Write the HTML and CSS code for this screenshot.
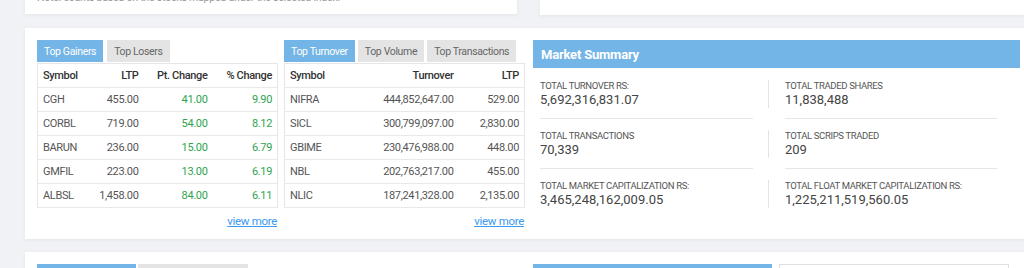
FILE: index.html
```html
<!DOCTYPE html>
<html lang="en">
<head>
    <meta charset="UTF-8">
    <meta name="viewport" content="width=device-width, initial-scale=1.0">
    <title>Market Overview</title>
    <link rel="stylesheet" href="styles.css">
</head>
<body>
    <div class="top-row">
        <div class="card note-card">
            <p class="note">Note: counts based on the stocks mapped under the selected index.</p>
        </div>
        <div class="card side-card"></div>
    </div>

    <div class="card main-card">
        <!-- gainers / losers -->
        <div class="col col-gainers">
            <div class="tabs">
                <span class="tab active">Top Gainers</span>
                <span class="tab">Top Losers</span>
            </div>
            <table class="data-table">
                <colgroup>
                    <col style="width:53px"><col style="width:53px"><col style="width:69px"><col style="width:65px">
                </colgroup>
                <thead>
                    <tr><th class="left">Symbol</th><th>LTP</th><th>Pt. Change</th><th>% Change</th></tr>
                </thead>
                <tbody id="gainersBody"></tbody>
            </table>
            <a class="view-more" href="#">view more</a>
        </div>

        <!-- turnover / volume / transactions -->
        <div class="col col-turnover">
            <div class="tabs">
                <span class="tab active">Top Turnover</span>
                <span class="tab">Top Volume</span>
                <span class="tab">Top Transactions</span>
            </div>
            <table class="data-table">
                <colgroup>
                    <col style="width:80px"><col style="width:94px"><col style="width:66px">
                </colgroup>
                <thead>
                    <tr><th class="left">Symbol</th><th>Turnover</th><th>LTP</th></tr>
                </thead>
                <tbody id="turnoverBody"></tbody>
            </table>
            <a class="view-more" href="#">view more</a>
        </div>

        <!-- market summary -->
        <div class="col col-summary">
            <div class="summary-head">Market Summary</div>
            <div class="summary-body" id="summaryBody"></div>
        </div>
    </div>

    <div class="card next-card">
        <div class="next-left">
            <span class="next-tab active"></span>
            <span class="next-tab"></span>
        </div>
        <div class="next-bar"></div>
        <div class="next-box"></div>
    </div>

    <script>
        const gainers = [
            ['CGH', '455.00', '41.00', '9.90'],
            ['CORBL', '719.00', '54.00', '8.12'],
            ['BARUN', '236.00', '15.00', '6.79'],
            ['GMFIL', '223.00', '13.00', '6.19'],
            ['ALBSL', '1,458.00', '84.00', '6.11']
        ];

        const turnover = [
            ['NIFRA', '444,852,647.00', '529.00'],
            ['SICL', '300,799,097.00', '2,830.00'],
            ['GBIME', '230,476,988.00', '448.00'],
            ['NBL', '202,763,217.00', '455.00'],
            ['NLIC', '187,241,328.00', '2,135.00']
        ];

        const summary = [
            ['Total Turnover Rs:', '5,692,316,831.07'],
            ['Total Traded Shares', '11,838,488'],
            ['Total Transactions', '70,339'],
            ['Total Scrips Traded', '209'],
            ['Total Market Capitalization Rs:', '3,465,248,162,009.05'],
            ['Total Float Market Capitalization Rs:', '1,225,211,519,560.05']
        ];

        function renderGainers() {
            const body = document.getElementById('gainersBody');
            gainers.forEach(g => {
                body.innerHTML += `
                    <tr>
                        <td class="left">${g[0]}</td>
                        <td>${g[1]}</td>
                        <td class="up">${g[2]}</td>
                        <td class="up">${g[3]}</td>
                    </tr>`;
            });
        }

        function renderTurnover() {
            const body = document.getElementById('turnoverBody');
            turnover.forEach(t => {
                body.innerHTML += `
                    <tr>
                        <td class="left">${t[0]}</td>
                        <td>${t[1]}</td>
                        <td>${t[2]}</td>
                    </tr>`;
            });
        }

        function renderSummary() {
            const body = document.getElementById('summaryBody');
            summary.forEach((s, i) => {
                const last = i >= summary.length - 2 ? ' last' : '';
                const side = i % 2 === 1 ? ' right' : '';
                body.innerHTML += `
                    <div class="stat${last}${side}">
                        <div class="stat-inner">
                            <div class="stat-label">${s[0]}</div>
                            <div class="stat-value">${s[1]}</div>
                        </div>
                    </div>`;
            });
        }

        renderGainers();
        renderTurnover();
        renderSummary();
    </script>
</body>
</html>
```

FILE: styles.css
```css
body, html {
    margin: 0;
    padding: 0;
    font-family: 'Roboto', 'Open Sans', sans-serif;
    background: #f1f2f6;
    color: #444;
    overflow: hidden;
}

.card {
    background-color: #fff;
    box-shadow: 0 1px 4px rgba(0,0,0,0.06);
}

/* top partial cards */
.top-row {
    display: flex;
    align-items: flex-start;
}

.note-card {
    margin-left: 25px;
    width: 492px;
    height: 14px;
    overflow: hidden;
}

.note {
    margin: -8px 0 0 12px;
    font-size: 10.5px;
    line-height: 11px;
    letter-spacing: -0.2px;
    color: #999;
    white-space: nowrap;
}

.side-card {
    margin-left: 23px;
    flex: 1;
    height: 15px;
}

/* main card */
.main-card {
    display: flex;
    align-items: flex-start;
    margin: 13px 0 0 25px;
    width: 1007px;
    height: 211px;
    padding: 12px 0 0 12px;
    box-sizing: border-box;
}

.col-gainers {
    width: 240px;
}

.col-turnover {
    width: 240px;
    margin-left: 7px;
}

.col-summary {
    width: 487px;
    margin-left: 9px;
}

.tabs {
    display: flex;
    gap: 4px;
    height: 22px;
}

.col-turnover .tabs {
    gap: 3px;
}

.tab {
    display: flex;
    align-items: center;
    flex-shrink: 0;
    padding: 0 7px;
    background-color: #e4e4e4;
    color: #666;
    font-size: 10.5px;
    letter-spacing: -0.35px;
    white-space: nowrap;
}

.tab.active {
    background-color: #74b5e8;
    color: #fff;
}

.tabs + .data-table {
    margin-top: 1px;
}

.data-table {
    width: 240px;
    table-layout: fixed;
    border-collapse: collapse;
    border: 1px solid #e6e6e6;
}

.data-table th,
.data-table td {
    height: 23px;
    padding: 0 5px;
    text-align: right;
    font-size: 11px;
    letter-spacing: -0.35px;
    border-bottom: 1px solid #e9e9e9;
    white-space: nowrap;
}

.data-table th {
    color: #333;
    font-weight: 500;
}

.data-table td {
    color: #555;
}

.data-table .left {
    text-align: left;
}

.data-table td.up {
    color: #2ea44f;
}

.view-more {
    display: block;
    margin-top: 6px;
    text-align: right;
    font-size: 11.5px;
    line-height: 14px;
    letter-spacing: -0.3px;
    color: #3a98f0;
}

/* market summary */
.summary-head {
    height: 28px;
    display: flex;
    align-items: center;
    padding-left: 8px;
    background-color: #74b5e8;
    color: #fff;
    font-size: 13px;
    font-weight: bold;
    letter-spacing: -0.2px;
}

.summary-body {
    display: grid;
    grid-template-columns: 213px 212px;
    column-gap: 32px;
    padding-left: 7px;
}

.stat {
    padding: 12px 0 10px;
    border-bottom: 1px solid #e6e6e6;
}

.stat + .stat + .stat {
    padding-top: 11px;
}

.stat.last {
    border-bottom: none;
}

.stat.right .stat-inner {
    margin-left: -17px;
    padding-left: 16px;
    border-left: 1px solid #e3e3e3;
}

.stat-label {
    font-size: 9.5px;
    line-height: 12px;
    text-transform: uppercase;
    letter-spacing: -0.35px;
    color: #555;
}

.stat-value {
    font-size: 13px;
    line-height: 16px;
    color: #444;
}

/* next card, cut by the window */
.next-card {
    display: flex;
    margin: 13px 0 0 25px;
    width: 1007px;
    height: 40px;
    padding: 12px 0 0 12px;
    box-sizing: border-box;
}

.next-left {
    display: flex;
    gap: 2px;
    width: 240px;
}

.next-tab {
    width: 110px;
    height: 22px;
    background-color: #e4e4e4;
}

.next-tab.active {
    width: 99px;
    background-color: #74b5e8;
}

.next-bar {
    margin-left: 256px;
    width: 239px;
    height: 22px;
    background-color: #74b5e8;
}

.next-box {
    margin-left: 7px;
    width: 230px;
    height: 22px;
    border: 1px solid #e0e0e0;
    box-sizing: border-box;
}
```
